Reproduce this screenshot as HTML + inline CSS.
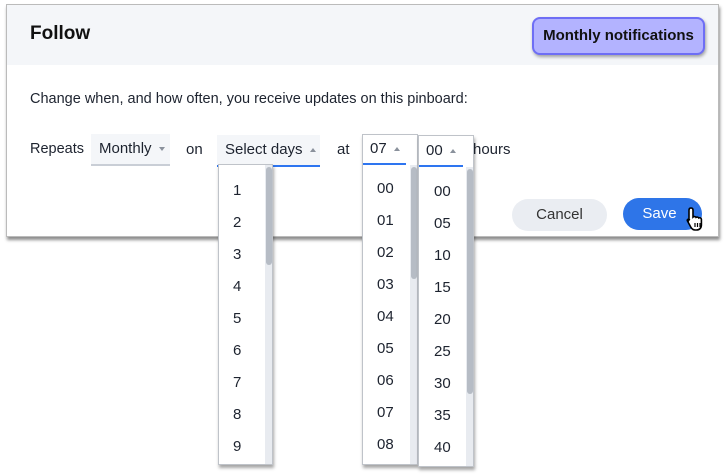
<!DOCTYPE html>
<html><head><meta charset="utf-8"><style>
*{box-sizing:border-box;margin:0;padding:0}
body{width:726px;height:475px;background:#fff;position:relative;overflow:hidden;font-family:"Liberation Sans",sans-serif;color:#1d232f}
.abs{position:absolute}
.dlg{left:6px;top:4px;width:713px;height:233px;background:#fff;border:1px solid #bbb;box-shadow:1px 3px 3px rgba(0,0,0,.45)}
.hdr{left:0;top:0;width:711px;height:60px;background:#f4f6f9}
.t{font-size:15px;white-space:nowrap}
.sel{background:#f4f6f9;border-bottom:2px solid #c9ced6;font-size:15px;padding-left:8px;line-height:30px;white-space:nowrap}
.sel.a{border-bottom-color:#2e75f0}
.car{display:inline-block;width:0;height:0;border-left:3.5px solid transparent;border-right:3.5px solid transparent;vertical-align:middle;margin-left:7px}
.dn{border-top:4px solid #8a919c}
.up{border-bottom:4px solid #8a919c}
.list{background:#fff;border:1px solid #bfc3c9;box-shadow:1px 3px 3px rgba(0,0,0,.35)}
.track{background:#e8ebf0;width:7px}
.thumb{background:#b6bcc5;width:6px;border-radius:3px}
.it{font-size:15px;position:absolute}
</style></head><body>
<div class="abs dlg">
 <div class="abs hdr"></div>
 <div class="abs" style="left:23px;top:18px;font-size:19px;font-weight:bold;color:#111">Follow</div>
 <div class="abs" style="left:525px;top:12px;width:173px;height:38px;background:#b3b3ff;border:2px solid #6e6ef5;border-radius:8px;box-shadow:1px 2px 3px rgba(0,0,0,.35);font-size:15px;font-weight:bold;color:#111;text-align:center;line-height:34px;white-space:nowrap">Monthly notifications</div>
 <div class="abs t" style="left:23px;top:86px;font-size:14.5px">Change when, and how often, you receive updates on this pinboard:</div>
 <div class="abs t" style="left:23px;top:136px;font-size:14.5px">Repeats</div>
 <div class="abs sel" style="left:84px;top:129px;width:79px;height:32px">Monthly<span class="car dn"></span></div>
 <div class="abs t" style="left:179px;top:136px">on</div>
 <div class="abs sel a" style="left:210px;top:130px;width:103px;height:32px">Select days<span class="car up"></span></div>
 <div class="abs t" style="left:330px;top:136px">at</div>
 <div class="abs t" style="left:408px;top:133px">:</div>
 <div class="abs t" style="left:466px;top:136px">hours</div>
 <div class="abs" style="left:505px;top:194px;width:95px;height:32px;border-radius:16px;background:#eaedf2;font-size:15px;text-align:center;line-height:32px;color:#333">Cancel</div>
 <div class="abs" style="left:616px;top:193px;width:79px;height:32px;border-radius:16px;background:#2e75e8;font-size:15px;color:#fff;text-align:center;line-height:31px;padding-right:6px">Save</div>
</div>
<svg class="abs" style="left:685px;top:206px" width="22" height="26" viewBox="0 0 22 26"><path d="M6 2c1.2 0 2 .8 2 2v7c.6-.6 2.4-.6 3 .4.8-.6 2.4-.4 2.8.6.8-.5 2.4-.2 2.6 1.2V19c0 3-2 5-5 5H10c-2 0-3-1-4-2.5L2.5 15c-.7-1.2.6-2.4 1.8-1.5L4 14V4c0-1.2.8-2 2-2z" fill="#fff" stroke="#000" stroke-width="1.6"/><path d="M10 17v4M12.5 17v4M15 17v4" stroke="#000" stroke-width="1.2"/></svg>
<div class="abs list" style="left:218px;top:164px;width:55px;height:301px">
 <div class="abs track" style="right:0;top:0;height:299px"></div>
 <div class="abs thumb" style="right:0;top:2px;height:98px"></div>
 <div class="it" style="left:14px;top:17px">1</div><div class="it" style="left:14px;top:49px">2</div><div class="it" style="left:14px;top:81px">3</div><div class="it" style="left:14px;top:113px">4</div><div class="it" style="left:14px;top:145px">5</div><div class="it" style="left:14px;top:177px">6</div><div class="it" style="left:14px;top:209px">7</div><div class="it" style="left:14px;top:241px">8</div><div class="it" style="left:14px;top:273px">9</div>
</div>
<div class="abs list" style="left:362px;top:134px;width:56px;height:331px">
 <div class="abs track" style="right:0;top:30px;height:299px"></div>
 <div class="abs thumb" style="right:0;top:32px;height:112px"></div>
 <div class="abs sel a" style="left:0;top:0;width:43px;height:30px;line-height:28px;padding-left:7px;background:#fff">07<span class="car up"></span></div>
 <div class="it" style="left:14px;top:45px">00</div><div class="it" style="left:14px;top:77px">01</div><div class="it" style="left:14px;top:109px">02</div><div class="it" style="left:14px;top:141px">03</div><div class="it" style="left:14px;top:173px">04</div><div class="it" style="left:14px;top:205px">05</div><div class="it" style="left:14px;top:237px">06</div><div class="it" style="left:14px;top:269px">07</div><div class="it" style="left:14px;top:301px">08</div>
</div>
<div class="abs list" style="left:418px;top:135px;width:56px;height:332px">
 <div class="abs track" style="right:0;top:31px;height:299px"></div>
 <div class="abs thumb" style="right:0;top:33px;height:225px"></div>
 <div class="abs sel a" style="left:0;top:0;width:44px;height:31px;line-height:29px;padding-left:7px;background:#fff">00<span class="car up"></span></div>
 <div class="it" style="left:15px;top:47px">00</div><div class="it" style="left:15px;top:79px">05</div><div class="it" style="left:15px;top:111px">10</div><div class="it" style="left:15px;top:143px">15</div><div class="it" style="left:15px;top:175px">20</div><div class="it" style="left:15px;top:207px">25</div><div class="it" style="left:15px;top:239px">30</div><div class="it" style="left:15px;top:271px">35</div><div class="it" style="left:15px;top:303px">40</div>
</div>
</body></html>
